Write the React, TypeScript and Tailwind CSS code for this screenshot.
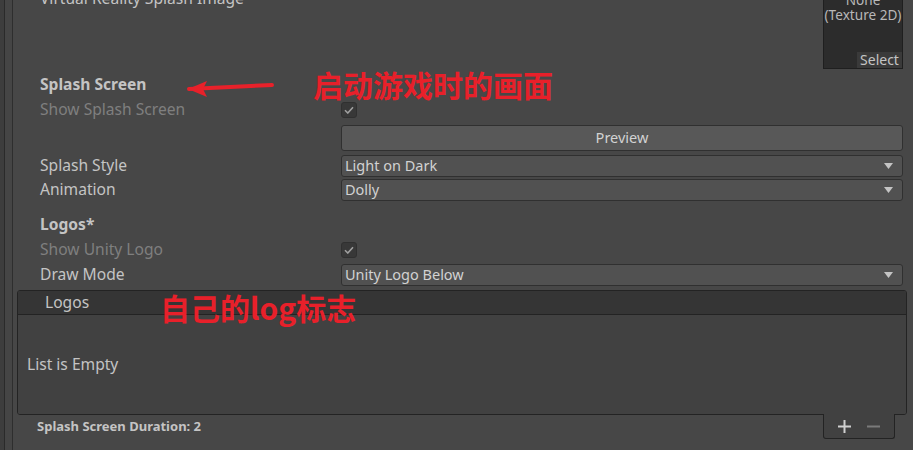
const Check = () => (
  <div className="w-[16px] h-[16px] rounded-[3px] bg-[#383838] border border-[#303030] flex items-center justify-center">
    <svg width="10" height="8" viewBox="0 0 10 8">
      <path d="M1 4.2 L3.8 7 L9 1.2" fill="none" stroke="#a0a0a0" strokeWidth="1.6" />
    </svg>
  </div>
);

const Dropdown = ({ value }: { value: string }) => (
  <div className="flex-1 h-[22px] rounded-[3px] bg-[#515151] border border-[#303030] flex items-center justify-between pl-[3px] pr-[9px] text-[14.5px] text-[#d2d2d2]">
    <span>{value}</span>
    <svg width="9" height="6" viewBox="0 0 9 6">
      <path d="M0 0 H9 L4.5 6 Z" fill="#c4c4c4" />
    </svg>
  </div>
);

const Row = ({
  label,
  dim,
  bold,
  children,
  className = "h-[25px]",
}: {
  label?: string;
  dim?: boolean;
  bold?: boolean;
  children?: React.ReactNode;
  className?: string;
}) => (
  <div className={`flex items-center ${className}`}>
    <div
      className={`w-[328px] pl-[27px] shrink-0 text-[15.6px] ${dim ? "text-[#7f7f7f]" : "text-[#c4c4c4]"} ${bold ? "font-bold" : ""}`}
    >
      {label}
    </div>
    <div className="flex-1 flex items-center pr-[10px]">{children}</div>
  </div>
);

export default function App() {
  return (
    <div
      className="w-[913px] h-[450px] bg-[#474747] overflow-hidden relative flex text-[15px] text-[#c4c4c4]"
      style={{ fontFamily: '"Noto Sans", "Noto Sans CJK SC", sans-serif' }}
    >
      {/* left edge strips */}
      <div className="w-[5px] bg-[#3d3d3d] border-r border-[#2a2a2a] shrink-0" />
      <div className="w-[8px] bg-[#454545] border-r border-[#2e2e2e] shrink-0" />

      <div className="flex-1 flex flex-col">
        {/* texture field row (cut off at top) */}
        <div className="flex mt-[-12px] h-[81px] pr-[10px]">
          <div className="flex-1 pl-[27px] leading-[20px] text-[15.6px] text-[#c4c4c4]">Virtual Reality Splash Image</div>
          <div className="w-[80px] h-[81px] bg-[#2c2c2c] border border-[#1f1f1f] flex flex-col items-center text-[13.6px] whitespace-nowrap text-[#b8b8b8] leading-[15px] relative">
            <span className="mt-[3px]">None</span>
            <span>(Texture 2D)</span>
            <div className="absolute right-0 bottom-0 w-[45px] h-[16px] bg-[#3a3a3a] text-[14px] leading-[16px] text-center text-[#c4c4c4]">
              Select
            </div>
          </div>
        </div>

        <Row label="Splash Screen" bold className="h-[25px] mt-[3px]" />
        <Row label="Show Splash Screen" dim>
          <Check />
        </Row>
        <Row className="h-[26px] mt-[3px]">
          <div className="flex-1 h-[26px] rounded-[3px] bg-[#585858] border border-[#303030] flex items-center justify-center text-[14.5px] text-[#d2d2d2]">
            Preview
          </div>
        </Row>
        <Row label="Splash Style" className="h-[25px] mt-[2px]">
          <Dropdown value="Light on Dark" />
        </Row>
        <Row label="Animation" className="h-[24px]">
          <Dropdown value="Dolly" />
        </Row>

        <Row label="Logos*" bold className="h-[25px] mt-[10px]" />
        <Row label="Show Unity Logo" dim>
          <Check />
        </Row>
        <Row label="Draw Mode" className="h-[26px]">
          <Dropdown value="Unity Logo Below" />
        </Row>

        {/* logos list */}
        <div className="ml-[4px] mr-[6px] mt-[2px] border border-[#232323] rounded-[3px] overflow-hidden">
          <div className="h-[24px] bg-[#353535] border-b border-[#232323] flex items-center pl-[27px] text-[15.6px] text-[#c4c4c4]">
            Logos
          </div>
          <div className="h-[99px] bg-[#414141] flex items-center pl-[9px] text-[15.6px] text-[#c4c4c4]">List is Empty</div>
        </div>

        <div className="flex items-start justify-between pr-[18px]">
          <div className="pl-[24px] pt-[2px] text-[13px] font-bold text-[#c4c4c4]">Splash Screen Duration: 2</div>
          <div className="w-[72px] h-[25px] mt-[-1px] bg-[#414141] border border-[#232323] border-t-0 rounded-b-[3px] flex items-center justify-around px-[6px]">
            <svg width="13" height="13" viewBox="0 0 13 13">
              <path d="M6.5 0 V13 M0 6.5 H13" stroke="#d0d0d0" strokeWidth="2" />
            </svg>
            <svg width="13" height="13" viewBox="0 0 13 13">
              <path d="M0 6.5 H13" stroke="#7a7a7a" strokeWidth="2" />
            </svg>
          </div>
        </div>
      </div>

      {/* red annotations */}
      <svg className="absolute left-[185px] top-[78px]" width="92" height="22" viewBox="0 0 92 22">
        <path d="M4 11 L87 7" stroke="#e8212a" strokeWidth="4" strokeLinecap="round" />
        <path d="M3 11 L22 3 L18 11 L22 19 Z" fill="#e8212a" />
      </svg>
      <div
        className="absolute left-[313px] top-[69px] text-[30px] leading-none font-bold text-[#e8202a]"
        style={{ fontFamily: '"Noto Sans CJK SC", sans-serif' }}
      >
        启动游戏时的画面
      </div>
      <div
        className="absolute left-[160px] top-[292px] text-[30px] leading-none font-bold text-[#e8202a]"
        style={{ fontFamily: '"Noto Sans CJK SC", sans-serif' }}
      >
        自己的log标志
      </div>
    </div>
  );
}
